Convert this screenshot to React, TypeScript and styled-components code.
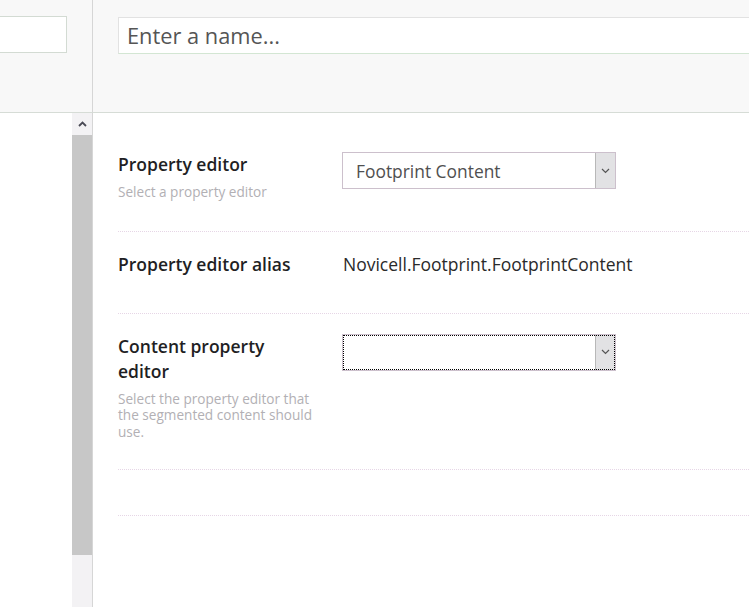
import React from "react";
import styled, { createGlobalStyle } from "styled-components";

const Global = createGlobalStyle`
  html, body {
    margin: 0;
    padding: 0;
    background: #fff;
    font-family: "Open Sans", "Liberation Sans", sans-serif;
    overflow: hidden;
  }
`;

const Page = styled.div`
  display: grid;
  grid-template-columns: 93px 1fr;
  grid-template-rows: 113px 1fr;
  height: 100vh;
  width: 100vw;
  overflow: hidden;
`;

const SideHead = styled.div`
  background: #f8f8f8;
  border-right: 1px solid #d6d6d6;
  border-bottom: 1px solid #d6dcd6;
  padding-top: 16px;
`;

const SideSearch = styled.div`
  width: 66px;
  height: 35px;
  background: #fff;
  border: 1px solid #d3dbd3;
  border-left: none;
`;

const MainHead = styled.div`
  background: #f8f8f8;
  border-bottom: 1px solid #d6dcd6;
  padding: 17px 0 0 25px;
  overflow: hidden;
`;

const NameInput = styled.div`
  height: 35px;
  width: 700px;
  background: #fff;
  border: 1px solid #e2e2e2;
  border-bottom-color: #d3e6d3;
  padding-left: 8px;
  display: flex;
  align-items: center;
  font-size: 21.8px;
  color: #555;
`;

const Side = styled.div`
  border-right: 1px solid #d6d6d6;
  display: flex;
  justify-content: flex-end;
`;

const ScrollBar = styled.div`
  width: 20px;
  display: flex;
  flex-direction: column;
  background: #f3f2f4;
`;

const ScrollUp = styled.div`
  height: 22px;
  display: flex;
  align-items: center;
  justify-content: center;
`;

const Thumb = styled.div`
  height: 420px;
  background: #c7c7c7;
`;

const Main = styled.div`
  padding: 19px 0 0 25px;
`;

const Row = styled.div<{ $bottom?: number }>`
  display: grid;
  grid-template-columns: 200px 1fr;
  column-gap: 24px;
  padding: 20px 0 ${(p) => p.$bottom ?? 30}px;
  border-bottom: 1px dotted #e6d6e6;
  min-height: ${(p) => (p.$bottom === 0 ? 46 : 0)}px;
  box-sizing: border-box;
`;

const LabelCol = styled.div`
  display: flex;
  flex-direction: column;
`;

const Label = styled.div`
  font-size: 17.5px;
  font-weight: 600;
  line-height: 25px;
  color: #1f1f24;
`;

const Hint = styled.div`
  font-size: 13.6px;
  line-height: 16.5px;
  color: #b2b0b4;
  margin-top: 7px;
`;

const Value = styled.div`
  font-size: 17.5px;
  line-height: 25px;
  color: #2a2a2a;
  padding-left: 1px;
`;

const Select = styled.div<{ $focus?: boolean }>`
  width: 274px;
  height: 37px;
  box-sizing: border-box;
  border: 1px solid #ccc0cc;
  background: #fff;
  display: flex;
  align-items: stretch;
  outline: ${(p) => (p.$focus ? "1px dotted #000" : "none")};
  outline-offset: -2px;
`;

const SelectText = styled.div`
  flex: 1;
  display: flex;
  align-items: center;
  padding-left: 13px;
  font-size: 17.4px;
  color: #505050;
`;

const Arrow = styled.div`
  width: 19px;
  background: #e2e2e4;
  border-left: 1px solid #b8b8b8;
  display: flex;
  align-items: center;
  justify-content: center;
`;

const Chevron = ({ up }: { up?: boolean }) => (
  <svg width="9" height="6" viewBox="0 0 9 6">
    <path
      d={up ? "M1 5 L4.5 1.5 L8 5" : "M1 1 L4.5 4.5 L8 1"}
      fill="none"
      stroke={up ? "#4a4a55" : "#555"}
      strokeWidth={up ? 1.8 : 1.2}
    />
  </svg>
);

const App = () => {
  return (
    <Page>
      <Global />
      <SideHead>
        <SideSearch />
      </SideHead>
      <MainHead>
        <NameInput>Enter a name...</NameInput>
      </MainHead>
      <Side>
        <ScrollBar>
          <ScrollUp>
            <Chevron up />
          </ScrollUp>
          <Thumb />
        </ScrollBar>
      </Side>
      <Main>
        <Row>
          <LabelCol>
            <Label>Property editor</Label>
            <Hint>Select a property editor</Hint>
          </LabelCol>
          <div>
            <Select>
              <SelectText>Footprint Content</SelectText>
              <Arrow>
                <Chevron />
              </Arrow>
            </Select>
          </div>
        </Row>
        <Row $bottom={36}>
          <LabelCol>
            <Label>Property editor alias</Label>
          </LabelCol>
          <Value>Novicell.Footprint.FootprintContent</Value>
        </Row>
        <Row $bottom={29}>
          <LabelCol>
            <Label>Content property editor</Label>
            <Hint>Select the property editor that the segmented content should use.</Hint>
          </LabelCol>
          <div>
            <Select $focus>
              <SelectText />
              <Arrow>
                <Chevron />
              </Arrow>
            </Select>
          </div>
        </Row>
        <Row $bottom={0} />
      </Main>
    </Page>
  );
};

export default App;
